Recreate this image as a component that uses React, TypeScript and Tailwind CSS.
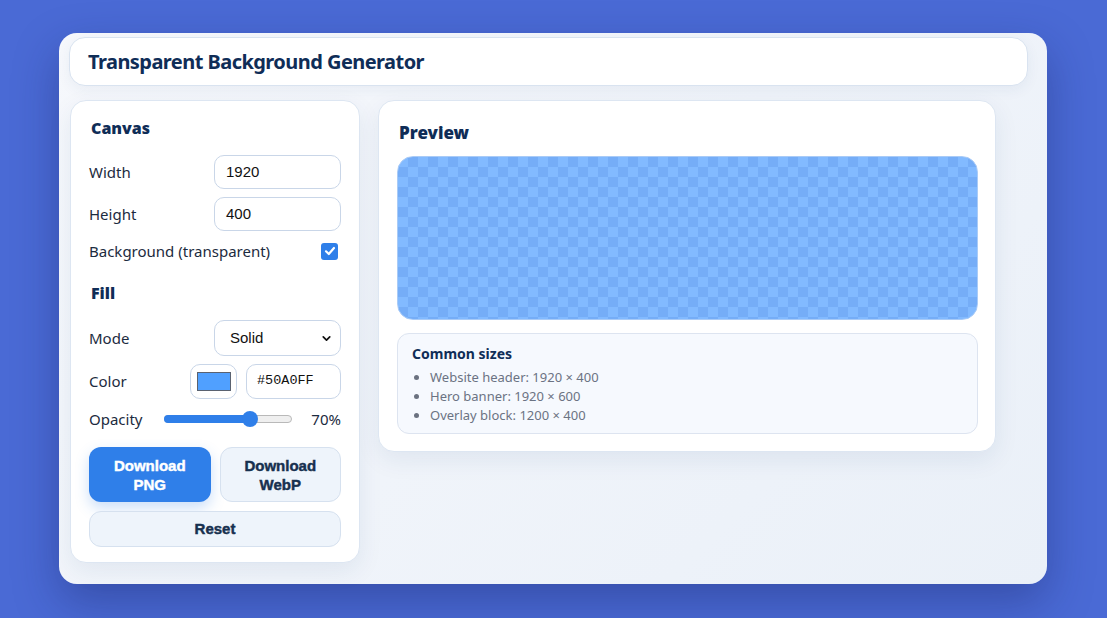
import React from "react";
import { ChevronDown } from "lucide-react";

const ui = "font-['Noto_Sans','Open_Sans',sans-serif]";
const arial = "font-['Liberation_Sans',Arial,sans-serif]";

function Field({ value }: { value: string }) {
  return (
    <div
      className={`flex h-[34px] w-[127px] items-center rounded-[10px] border border-[#c9d6e8] bg-white pl-[11px] text-[15px] text-[#111] ${arial}`}
    >
      {value}
    </div>
  );
}

function Label({ children, className = "" }: { children: React.ReactNode; className?: string }) {
  return <span className={`text-[15px] text-[#1c2b40] ${ui} ${className}`}>{children}</span>;
}

function Heading({ children, className = "" }: { children: React.ReactNode; className?: string }) {
  return (
    <h3 className={`text-[16px] leading-[20px] font-black text-[#0f2d57] ${ui} ${className}`}>{children}</h3>
  );
}

function Slider({ value }: { value: number }) {
  const pos = 8 + (value / 100) * 112;
  return (
    <div className="relative h-[16px] w-[128px]">
      <div className="absolute left-0 right-0 top-[4px] h-[8px] rounded-full border border-[#b9b9b9] bg-[#efefef]" />
      <div
        className="absolute left-0 top-[4px] h-[8px] rounded-full bg-[#2f7fe9]"
        style={{ width: pos }}
      />
      <div
        className="absolute top-0 h-[16px] w-[16px] rounded-full bg-[#2f7fe9]"
        style={{ left: pos - 8 }}
      />
    </div>
  );
}

export default function App() {
  return (
    <div className="min-h-screen bg-[#4a6ad5] pl-[59px] pt-[33px]">
      <div className="h-[551px] w-[988px] rounded-[18px] bg-[linear-gradient(135deg,#f6f8fc,#eaf0f8)] pl-[10px] pt-[4px] shadow-[0_18px_45px_rgba(20,30,90,0.35)]">
        {/* title bar */}
        <header className="flex h-[49px] w-[959px] items-center rounded-[16px] border border-[#d9e3f0] bg-white pl-[18px] shadow-[0_4px_14px_rgba(30,60,120,0.06)]">
          <h1 className={`text-[20px] font-bold tracking-[-0.55px] text-[#0f2d57] ${ui}`}>
            Transparent Background Generator
          </h1>
        </header>

        <div className="ml-[1px] mt-[14px] grid grid-cols-[290px_618px] items-start gap-[18px]">
          {/* controls */}
          <section className="flex flex-col rounded-[16px] border border-[#dde6f2] bg-white px-[18px] pb-[15px] pt-[17px] shadow-[0_8px_24px_rgba(30,60,120,0.08)]">
            <Heading className="ml-[2px]">Canvas</Heading>

            <div className="mt-[17px] flex h-[34px] items-center justify-between">
              <Label>Width</Label>
              <Field value="1920" />
            </div>
            <div className="mt-[8px] flex h-[34px] items-center justify-between">
              <Label>Height</Label>
              <Field value="400" />
            </div>
            <div className="mt-[10px] flex h-[20px] items-center justify-between">
              <Label>Background (transparent)</Label>
              <span className="mr-[3px] flex h-[17px] w-[17px] items-center justify-center rounded-[3px] bg-[#2f7fe9]">
                <svg width="12" height="12" viewBox="0 0 12 12" fill="none">
                  <path d="M2 6.3 4.8 9 10 3" stroke="#fff" strokeWidth="2.2" strokeLinecap="round" strokeLinejoin="round" />
                </svg>
              </span>
            </div>

            <Heading className="ml-[2px] mt-[22px]">Fill</Heading>

            <div className="mt-[17px] flex h-[36px] items-center justify-between">
              <Label>Mode</Label>
              <div
                className={`flex h-[36px] w-[127px] items-center justify-between rounded-[10px] border border-[#c9d6e8] bg-white pl-[15px] pr-[7px] text-[15px] text-[#111] ${arial}`}
              >
                Solid
                <ChevronDown size={13} strokeWidth={3.2} className="text-[#111]" />
              </div>
            </div>

            <div className="mt-[8px] flex h-[35px] items-center justify-between">
              <Label>Color</Label>
              <div className="flex gap-[9px]">
                <div className="flex h-[35px] w-[47px] items-center justify-center rounded-[10px] border border-[#c9d6e8] bg-white">
                  <div className="h-[19px] w-[34px] border border-[#5a6270] bg-[#50a0ff]" />
                </div>
                <div className="flex h-[35px] w-[95px] items-center rounded-[10px] border border-[#c9d6e8] bg-white pl-[10px] font-['Liberation_Mono','DejaVu_Sans_Mono',monospace] text-[13.5px] text-[#111]">
                  #50A0FF
                </div>
              </div>
            </div>

            <div className="mt-[10px] flex h-[20px] items-center">
              <Label className="w-[75px]">Opacity</Label>
              <Slider value={70} />
              <span className={`ml-auto text-[15px] text-[#1c2b40] ${ui}`}>70%</span>
            </div>

            <div className={`mt-[18px] grid grid-cols-2 gap-[9px] ${arial}`}>
              <button className="h-[55px] rounded-[12px] bg-[#2f7fe9] text-[15px] leading-[19px] font-bold text-white shadow-[0_6px_14px_rgba(47,127,233,0.25)] [-webkit-text-stroke:0.45px_white]">
                Download
                <br />
                PNG
              </button>
              <button className="h-[55px] rounded-[12px] border border-[#d6e1ef] bg-[#eef4fb] text-[15px] leading-[19px] font-bold text-[#17304f] [-webkit-text-stroke:0.45px_#17304f]">
                Download
                <br />
                WebP
              </button>
            </div>
            <button
              className={`mt-[9px] h-[36px] rounded-[12px] border border-[#d6e1ef] bg-[#eef4fb] text-[15px] font-bold text-[#17304f] [-webkit-text-stroke:0.45px_#17304f] ${arial}`}
            >
              Reset
            </button>
          </section>

          {/* preview */}
          <section className="flex flex-col rounded-[16px] border border-[#dde6f2] bg-white px-[18px] pb-[17px] pt-[22px] shadow-[0_8px_24px_rgba(30,60,120,0.08)]">
            <Heading className="ml-[2px] text-[17px]">Preview</Heading>
            <div className="mt-[13px] h-[164px] w-[581px] rounded-[16px] border border-[#a9cbf7] bg-[conic-gradient(#75adf7_25%,#82baff_0_50%,#75adf7_0_75%,#82baff_0)] bg-size-[20px_20px]" />
            <div className="mt-[13px] h-[101px] w-[581px] rounded-[12px] border border-[#dde4f0] bg-[#f6f9fe] px-[14px] pt-[12px]">
              <div className={`text-[14px] leading-[16px] font-bold text-[#0f2d57] ${ui}`}>Common sizes</div>
              <ul className={`mt-[6px] list-disc pl-[18px] text-[13px] leading-[19px] text-[#6b7383] marker:text-[#6b7280] ${ui}`}>
                <li>Website header: 1920 × 400</li>
                <li>Hero banner: 1920 × 600</li>
                <li>Overlay block: 1200 × 400</li>
              </ul>
            </div>
          </section>
        </div>
      </div>
    </div>
  );
}
